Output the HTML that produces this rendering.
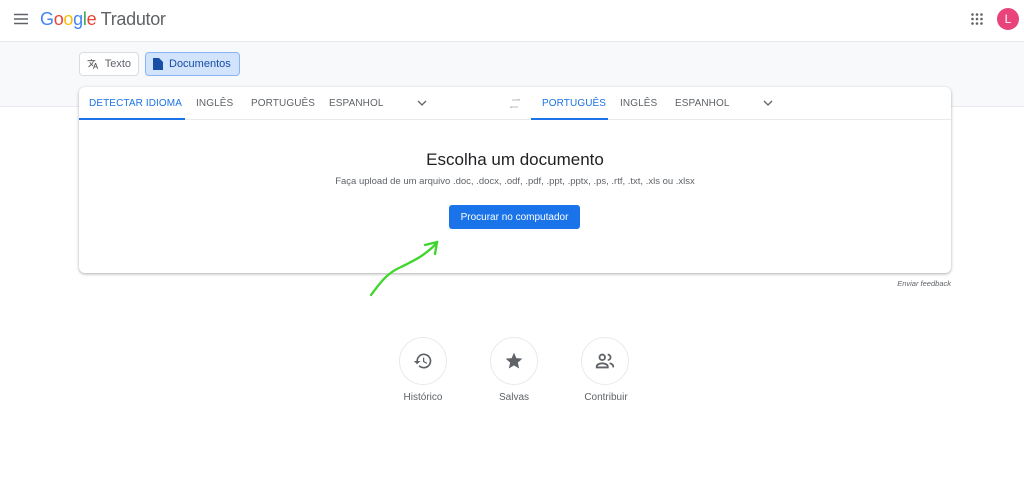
<!DOCTYPE html>
<html><head><meta charset="utf-8"><style>
*{margin:0;padding:0;box-sizing:border-box}
body{width:1024px;height:496px;background:#fff;font-family:"Liberation Sans",Arial,sans-serif;position:relative;overflow:hidden;color:#3c4043}
.abs{position:absolute}
.band{left:0;top:41px;width:1024px;height:66px;background:#f8f9fa;border-top:1px solid #e8eaed;border-bottom:1px solid #e8eaed}
.btn{top:52px;height:24px;border:1px solid #dadce0;border-radius:4px;font-size:11px;display:flex;align-items:center;gap:6px;padding:0 7px;color:#5f6368;background:#fff}
.card{left:79px;top:87px;width:872px;height:186px;background:#fff;border-radius:6px;box-shadow:0 1px 3px rgba(60,64,67,.3),0 1px 2px rgba(60,64,67,.15)}
.tabs{position:absolute;left:0;top:0;width:100%;height:33px;border-bottom:1px solid #e8eaed}
.t{position:absolute;top:11px;font-size:10px;color:#5f6368;letter-spacing:.1px}
.t.on{color:#1a73e8}
.ul{position:absolute;top:31px;height:2px;background:#1a73e8}
.circ{width:48px;height:48px;border-radius:50%;border:1px solid #e8eaed;display:flex;align-items:center;justify-content:center}
.lbl{font-size:10px;color:#5f6368;width:80px;text-align:center}
</style></head><body>
<svg class="abs" style="left:14px;top:13px" width="14" height="12" viewBox="0 0 14 12"><path d="M0 1.5h14M0 6h14M0 10.5h14" stroke="#5f6368" stroke-width="1.6"/></svg>
<div class="abs" style="left:40px;top:9px;font-size:18px;letter-spacing:-.3px"><span style="color:#4285f4">G</span><span style="color:#ea4335">o</span><span style="color:#fbbc05">o</span><span style="color:#4285f4">g</span><span style="color:#34a853">l</span><span style="color:#ea4335">e</span> <span style="color:#5f6368">Tradutor</span></div>
<svg class="abs" style="left:971px;top:13px" width="12" height="12" viewBox="0 0 12 12" fill="#5f6368"><circle cx="1.5" cy="1.5" r="1.3"/><circle cx="6" cy="1.5" r="1.3"/><circle cx="10.5" cy="1.5" r="1.3"/><circle cx="1.5" cy="6" r="1.3"/><circle cx="6" cy="6" r="1.3"/><circle cx="10.5" cy="6" r="1.3"/><circle cx="1.5" cy="10.5" r="1.3"/><circle cx="6" cy="10.5" r="1.3"/><circle cx="10.5" cy="10.5" r="1.3"/></svg>
<div class="abs" style="left:997px;top:8px;width:22px;height:22px;border-radius:50%;background:#e8437a;color:#fff;font-size:12px;text-align:center;line-height:22px">L</div>
<div class="abs band"></div>
<div class="abs btn" style="left:79px;width:60px"><svg width="14" height="14" viewBox="0 0 24 24"><path d="M12.9 15.1l-2.5-2.5v0c1.7-1.9 3-4.1 3.7-6.6H17V4h-7V2H8v2H1v2h11.2C11.5 8 10.4 9.9 9 11.4 8 10.4 7.3 9.2 6.7 8h-2c.7 1.6 1.7 3.1 2.9 4.4L2.5 17.4 4 19l5-5 3.1 3.1.8-2zM18.5 10h-2L12 22h2l1.1-3h4.8l1.1 3h2l-4.5-12zm-2.6 7l1.6-4.3 1.6 4.3h-3.2z" fill="#5f6368"/></svg>Texto</div>
<div class="abs btn" style="left:145px;width:95px;background:#d2e3fc;border-color:#8ab4f8;color:#174ea6"><svg width="10" height="12" viewBox="0 0 10 12"><path d="M0 0h6l4 4v8H0z" fill="#174ea6"/></svg>Documentos</div>
<div class="abs card">
 <div class="tabs">
  <div class="t on" style="left:10px">DETECTAR IDIOMA</div><div class="ul" style="left:0;width:106px"></div>
  <div class="t" style="left:117px">INGLÊS</div>
  <div class="t" style="left:172px">PORTUGUÊS</div>
  <div class="t" style="left:250px">ESPANHOL</div>
  <svg style="position:absolute;left:338px;top:13px" width="10" height="7"><path d="M1 1l4 4 4-4" stroke="#5f6368" stroke-width="1.3" fill="none"/></svg>
  <svg style="position:absolute;left:430px;top:12px" width="12" height="9"><path d="M3 1l8 0M9 0l2 1M1 8h8M3 9L1 8" stroke="#bbb" stroke-width="1" fill="none"/></svg>
  <div class="t on" style="left:463px">PORTUGUÊS</div><div class="ul" style="left:452px;width:77px"></div>
  <div class="t" style="left:541px">INGLÊS</div>
  <div class="t" style="left:596px">ESPANHOL</div>
  <svg style="position:absolute;left:684px;top:13px" width="10" height="7"><path d="M1 1l4 4 4-4" stroke="#5f6368" stroke-width="1.3" fill="none"/></svg>
 </div>
 <div style="position:absolute;left:0;width:100%;top:63px;text-align:center;font-size:17px;color:#202124">Escolha um documento</div>
 <div style="position:absolute;left:0;width:100%;top:89px;text-align:center;font-size:9.5px;color:#5f6368">Faça upload de um arquivo .doc, .docx, .odf, .pdf, .ppt, .pptx, .ps, .rtf, .txt, .xls ou .xlsx</div>
 <div style="position:absolute;left:370px;top:118px;width:131px;height:24px;background:#1a73e8;border-radius:3px;color:#fff;font-size:10px;display:flex;align-items:center;justify-content:center">Procurar no computador</div>
</div>
<svg class="abs" style="left:365px;top:235px" width="80" height="65"><path d="M6 60C15 48 22 38 36 32C48 26 58 22 72 8M60 10L72 7L70 19" stroke="#3ed62b" stroke-width="2.3" fill="none" stroke-linecap="round"/></svg>
<div class="abs" style="left:800px;top:279px;width:151px;text-align:right;font-size:7.5px;font-style:italic;color:#5f6368">Enviar feedback</div>
<div class="abs circ" style="left:399px;top:337px"><svg width="20" height="20" viewBox="0 0 24 24"><path d="M13 3a9 9 0 0 0-9 9H1l3.9 3.9L9 12H6a7 7 0 1 1 2 4.9l-1.4 1.4A9 9 0 1 0 13 3zm-1 5v5l4.3 2.5.7-1.2-3.5-2.1V8z" fill="#5f6368"/></svg></div>
<div class="abs circ" style="left:490px;top:337px"><svg width="20" height="20" viewBox="0 0 24 24"><path d="M12 17.3L18.2 21l-1.6-7L22 9.2l-7.2-.6L12 2 9.2 8.6 2 9.2 7.4 14l-1.6 7z" fill="#5f6368"/></svg></div>
<div class="abs circ" style="left:581px;top:337px"><svg width="22" height="22" viewBox="0 0 24 24" fill="none" stroke="#5f6368" stroke-width="2"><circle cx="9" cy="8" r="3"/><path d="M3 19v-1c0-2 3-3.5 6-3.5s6 1.5 6 3.5v1zM15 5a3 3 0 0 1 0 6M17 14.5c2 .5 4 1.5 4 3.5v1"/></svg></div>
<div class="abs lbl" style="left:383px;top:392px">Histórico</div>
<div class="abs lbl" style="left:474px;top:392px">Salvas</div>
<div class="abs lbl" style="left:566px;top:392px">Contribuir</div>
</body></html>
